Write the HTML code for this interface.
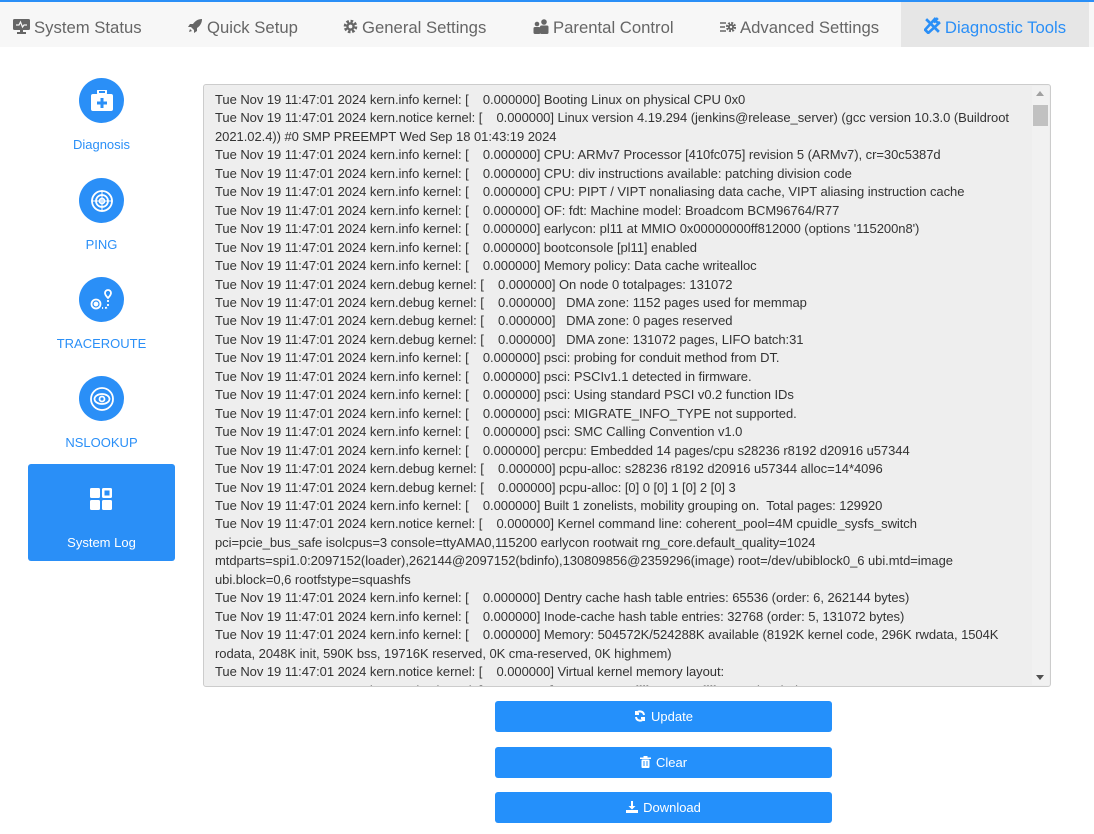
<!DOCTYPE html>
<html><head><meta charset="utf-8"><style>
body{margin:0;width:1094px;height:834px;background:#fff;font-family:"Liberation Sans",Arial,sans-serif;position:relative;overflow:hidden}
.nav{position:absolute;left:0;top:0;width:1094px;height:47px;background:#f7f7f7;border-top:2px solid #2a8ff7;box-sizing:border-box}
.tab{position:absolute;top:0;height:45px;line-height:51px;font-size:16.7px;color:#666}
.tab svg{vertical-align:-1px;margin-right:4px}
.act{background:#e6e6e6;color:#2a8ff7;left:901px;width:188px;text-align:center}
.side{position:absolute;left:28px;width:147px;text-align:center;color:#2a8ff7;font-size:13px}
.circ{width:45px;height:45px;border-radius:50%;background:#2a8ff7;margin:0 auto;display:flex;align-items:center;justify-content:center}
.sl{position:absolute;left:28px;top:464px;width:147px;height:97px;background:#2a8ff7;border-radius:3px;color:#fff;font-size:13px;text-align:center}
.log{position:absolute;left:203px;top:84px;width:848px;height:603px;background:#eee;border:1px solid #ccc;border-radius:3px;box-sizing:border-box;overflow:hidden}
.txt{position:absolute;left:11px;top:6px;width:805px;font-size:13px;letter-spacing:-0.05px;line-height:18.45px;color:#333;white-space:pre-wrap}
.sb{position:absolute;right:1px;top:1px;width:17px;height:599px;background:#f1f1f1}
.btn{position:absolute;left:495px;width:337px;height:31px;background:#2490fb;border-radius:3px;color:#fff;font-size:13px;text-align:center;line-height:31px}
.btn svg{vertical-align:-1px;margin-right:5px}
</style></head><body>
<div class="nav">
<div class="tab" style="left:13px"><svg width="17" height="16" viewBox="0 0 17 16"><rect x="0" y="1" width="17" height="11" rx="1.5" fill="#666"/><rect x="7" y="12" width="3" height="3" fill="#666"/><rect x="4" y="14" width="9" height="2" fill="#666"/><path d="M3 7h3l1.5-3 2 5 1.5-2h3" stroke="#f7f7f7" stroke-width="1.2" fill="none"/></svg>System Status</div>
<div class="tab" style="left:187px"><svg width="16" height="16" viewBox="0 0 16 16"><path d="M15 1c-4 0-7 2-9 5H3l-2 3h3l3 3v3l3-2V10c3-2 5-5 5-9z" fill="#666"/><path d="M3 11l2 2-3 1z" fill="#666"/></svg>Quick Setup</div>
<div class="tab" style="left:343px"><svg width="15" height="15" viewBox="0 0 16 16"><circle cx="8" cy="8" r="5.5" fill="none" stroke="#666" stroke-width="3.5" stroke-dasharray="2.6 1.7"/><circle cx="8" cy="8" r="4.5" fill="#666"/><circle cx="8" cy="8" r="2" fill="#f7f7f7"/></svg>General Settings</div>
<div class="tab" style="left:533px"><svg width="16" height="15" viewBox="0 0 16 15"><circle cx="4" cy="5" r="2.3" fill="#666"/><circle cx="11" cy="3" r="2.8" fill="#666"/><rect x="0.5" y="8" width="7" height="7" rx="1.5" fill="#666"/><rect x="7" y="6.5" width="8.5" height="8.5" rx="1.5" fill="#666"/></svg>Parental Control</div>
<div class="tab" style="left:720px"><svg width="16" height="14" viewBox="0 0 16 14"><path d="M0 3h6M0 7h5M0 11h6" stroke="#666" stroke-width="1.6"/><circle cx="11" cy="7" r="3.8" fill="none" stroke="#666" stroke-width="2.6" stroke-dasharray="1.8 1.2"/><circle cx="11" cy="7" r="3" fill="#666"/><circle cx="11" cy="7" r="1.2" fill="#f7f7f7"/></svg>Advanced Settings</div>
<div class="tab act"><svg width="17" height="17" viewBox="0 0 16 16"><path d="M2 2l12 12" stroke="#2a8ff7" stroke-width="2.5"/><path d="M13 1l-4 4M11 1a3 3 0 0 0 4 4L4 15 1 12z" stroke="#2a8ff7" stroke-width="2.5" fill="none"/></svg>Diagnostic Tools</div>
</div>

<div class="side" style="top:78px"><div class="circ"><svg width="24" height="22" viewBox="0 0 24 22"><rect x="8" y="0" width="8" height="4" rx="1" fill="none" stroke="#fff" stroke-width="2"/><rect x="1" y="4" width="22" height="17" rx="2" fill="#fff"/><path d="M12 8v10M7 13h10" stroke="#2a8ff7" stroke-width="3"/></svg></div><div style="margin-top:14px">Diagnosis</div></div>
<div class="side" style="top:178px"><div class="circ"><svg width="24" height="24" viewBox="0 0 24 24" fill="none" stroke="#fff" stroke-width="1.8"><circle cx="12" cy="12" r="10"/><circle cx="12" cy="12" r="6"/><circle cx="12" cy="12" r="2.5"/><path d="M12 1v22M1 12h22" stroke-width="1"/></svg></div><div style="margin-top:14px">PING</div></div>
<div class="side" style="top:277px"><div class="circ"><svg width="26" height="24" viewBox="0 0 26 24" fill="none" stroke="#fff" stroke-width="1.8"><circle cx="7" cy="16" r="4.5"/><circle cx="7" cy="16" r="1.5" fill="#fff"/><path d="M19 10c-2-2-3-4-3-5a3 3 0 0 1 6 0c0 1-1 3-3 5z"/><path d="M19 12v6c0 2-2 2-6 2" stroke-dasharray="2 2"/></svg></div><div style="margin-top:14px">TRACEROUTE</div></div>
<div class="side" style="top:376px"><div class="circ"><svg width="26" height="26" viewBox="0 0 26 26" fill="none" stroke="#fff" stroke-width="1.8"><circle cx="13" cy="13" r="11"/><ellipse cx="13" cy="13" rx="7.5" ry="5"/><circle cx="13" cy="13" r="2.5"/></svg></div><div style="margin-top:14px">NSLOOKUP</div></div>
<div class="sl"><svg style="position:absolute;left:62px;top:24px" width="22" height="22" viewBox="0 0 22 22"><rect x="0" y="0" width="10" height="10" rx="1.5" fill="#fff"/><rect x="12" y="0" width="10" height="10" rx="1.5" fill="#fff"/><rect x="14.5" y="2.5" width="5" height="5" fill="#2a8ff7"/><rect x="0" y="12" width="10" height="10" rx="1.5" fill="#fff"/><rect x="12" y="12" width="10" height="10" rx="1.5" fill="#fff"/></svg><div style="position:absolute;left:0;right:0;top:71px">System Log</div></div>

<div class="log"><div class="txt">Tue Nov 19 11:47:01 2024 kern.info kernel: [    0.000000] Booting Linux on physical CPU 0x0
Tue Nov 19 11:47:01 2024 kern.notice kernel: [    0.000000] Linux version 4.19.294 (jenkins@release_server) (gcc version 10.3.0 (Buildroot 2021.02.4)) #0 SMP PREEMPT Wed Sep 18 01:43:19 2024
Tue Nov 19 11:47:01 2024 kern.info kernel: [    0.000000] CPU: ARMv7 Processor [410fc075] revision 5 (ARMv7), cr=30c5387d
Tue Nov 19 11:47:01 2024 kern.info kernel: [    0.000000] CPU: div instructions available: patching division code
Tue Nov 19 11:47:01 2024 kern.info kernel: [    0.000000] CPU: PIPT / VIPT nonaliasing data cache, VIPT aliasing instruction cache
Tue Nov 19 11:47:01 2024 kern.info kernel: [    0.000000] OF: fdt: Machine model: Broadcom BCM96764/R77
Tue Nov 19 11:47:01 2024 kern.info kernel: [    0.000000] earlycon: pl11 at MMIO 0x00000000ff812000 (options '115200n8')
Tue Nov 19 11:47:01 2024 kern.info kernel: [    0.000000] bootconsole [pl11] enabled
Tue Nov 19 11:47:01 2024 kern.info kernel: [    0.000000] Memory policy: Data cache writealloc
Tue Nov 19 11:47:01 2024 kern.debug kernel: [    0.000000] On node 0 totalpages: 131072
Tue Nov 19 11:47:01 2024 kern.debug kernel: [    0.000000]   DMA zone: 1152 pages used for memmap
Tue Nov 19 11:47:01 2024 kern.debug kernel: [    0.000000]   DMA zone: 0 pages reserved
Tue Nov 19 11:47:01 2024 kern.debug kernel: [    0.000000]   DMA zone: 131072 pages, LIFO batch:31
Tue Nov 19 11:47:01 2024 kern.info kernel: [    0.000000] psci: probing for conduit method from DT.
Tue Nov 19 11:47:01 2024 kern.info kernel: [    0.000000] psci: PSCIv1.1 detected in firmware.
Tue Nov 19 11:47:01 2024 kern.info kernel: [    0.000000] psci: Using standard PSCI v0.2 function IDs
Tue Nov 19 11:47:01 2024 kern.info kernel: [    0.000000] psci: MIGRATE_INFO_TYPE not supported.
Tue Nov 19 11:47:01 2024 kern.info kernel: [    0.000000] psci: SMC Calling Convention v1.0
Tue Nov 19 11:47:01 2024 kern.info kernel: [    0.000000] percpu: Embedded 14 pages/cpu s28236 r8192 d20916 u57344
Tue Nov 19 11:47:01 2024 kern.debug kernel: [    0.000000] pcpu-alloc: s28236 r8192 d20916 u57344 alloc=14*4096
Tue Nov 19 11:47:01 2024 kern.debug kernel: [    0.000000] pcpu-alloc: [0] 0 [0] 1 [0] 2 [0] 3
Tue Nov 19 11:47:01 2024 kern.info kernel: [    0.000000] Built 1 zonelists, mobility grouping on.  Total pages: 129920
Tue Nov 19 11:47:01 2024 kern.notice kernel: [    0.000000] Kernel command line: coherent_pool=4M cpuidle_sysfs_switch
pci=pcie_bus_safe isolcpus=3 console=ttyAMA0,115200 earlycon rootwait rng_core.default_quality=1024 mtdparts=spi1.0:2097152(loader),262144@2097152(bdinfo),130809856@2359296(image) root=/dev/ubiblock0_6 ubi.mtd=image ubi.block=0,6 rootfstype=squashfs
Tue Nov 19 11:47:01 2024 kern.info kernel: [    0.000000] Dentry cache hash table entries: 65536 (order: 6, 262144 bytes)
Tue Nov 19 11:47:01 2024 kern.info kernel: [    0.000000] Inode-cache hash table entries: 32768 (order: 5, 131072 bytes)
Tue Nov 19 11:47:01 2024 kern.info kernel: [    0.000000] Memory: 504572K/524288K available (8192K kernel code, 296K rwdata, 1504K rodata, 2048K init, 590K bss, 19716K reserved, 0K cma-reserved, 0K highmem)
Tue Nov 19 11:47:01 2024 kern.notice kernel: [    0.000000] Virtual kernel memory layout:
Tue Nov 19 11:47:01 2024 kern.notice kernel: [    0.000000]     vector  : 0xffff0000 - 0xffff1000   (   4 kB)</div>
<div class="sb"><div style="position:absolute;left:4px;top:5px;border:4px solid transparent;border-bottom:5px solid #a0a0a0;border-top:0"></div><div style="position:absolute;left:1px;top:19px;width:15px;height:21px;background:#c1c1c1"></div><div style="position:absolute;left:4px;bottom:5px;border:4px solid transparent;border-top:5px solid #505050;border-bottom:0"></div></div>
</div>

<div class="btn" style="top:701px"><svg width="12" height="12" viewBox="0 0 12 12" fill="none" stroke="#fff" stroke-width="2"><path d="M10 5A4 4 0 0 0 2.5 3.5M2 7a4 4 0 0 0 7.5 1.5"/><path d="M2 1v3h3M10 11V8H7" fill="#fff"/></svg>Update</div>
<div class="btn" style="top:747px"><svg width="11" height="12" viewBox="0 0 11 12"><rect x="0" y="1.5" width="11" height="1.5" fill="#fff"/><rect x="3.5" y="0" width="4" height="2" fill="#fff"/><rect x="1.5" y="3.5" width="8" height="8.5" rx="1" fill="#fff"/><path d="M4 5v5M7 5v5" stroke="#2490fb"/></svg>Clear</div>
<div class="btn" style="top:792px"><svg width="12" height="12" viewBox="0 0 12 12" fill="#fff"><path d="M5 0h2v5h2.5L6 8.5 2.5 5H5z"/><rect x="0" y="9" width="12" height="3"/></svg>Download</div>
</body></html>
